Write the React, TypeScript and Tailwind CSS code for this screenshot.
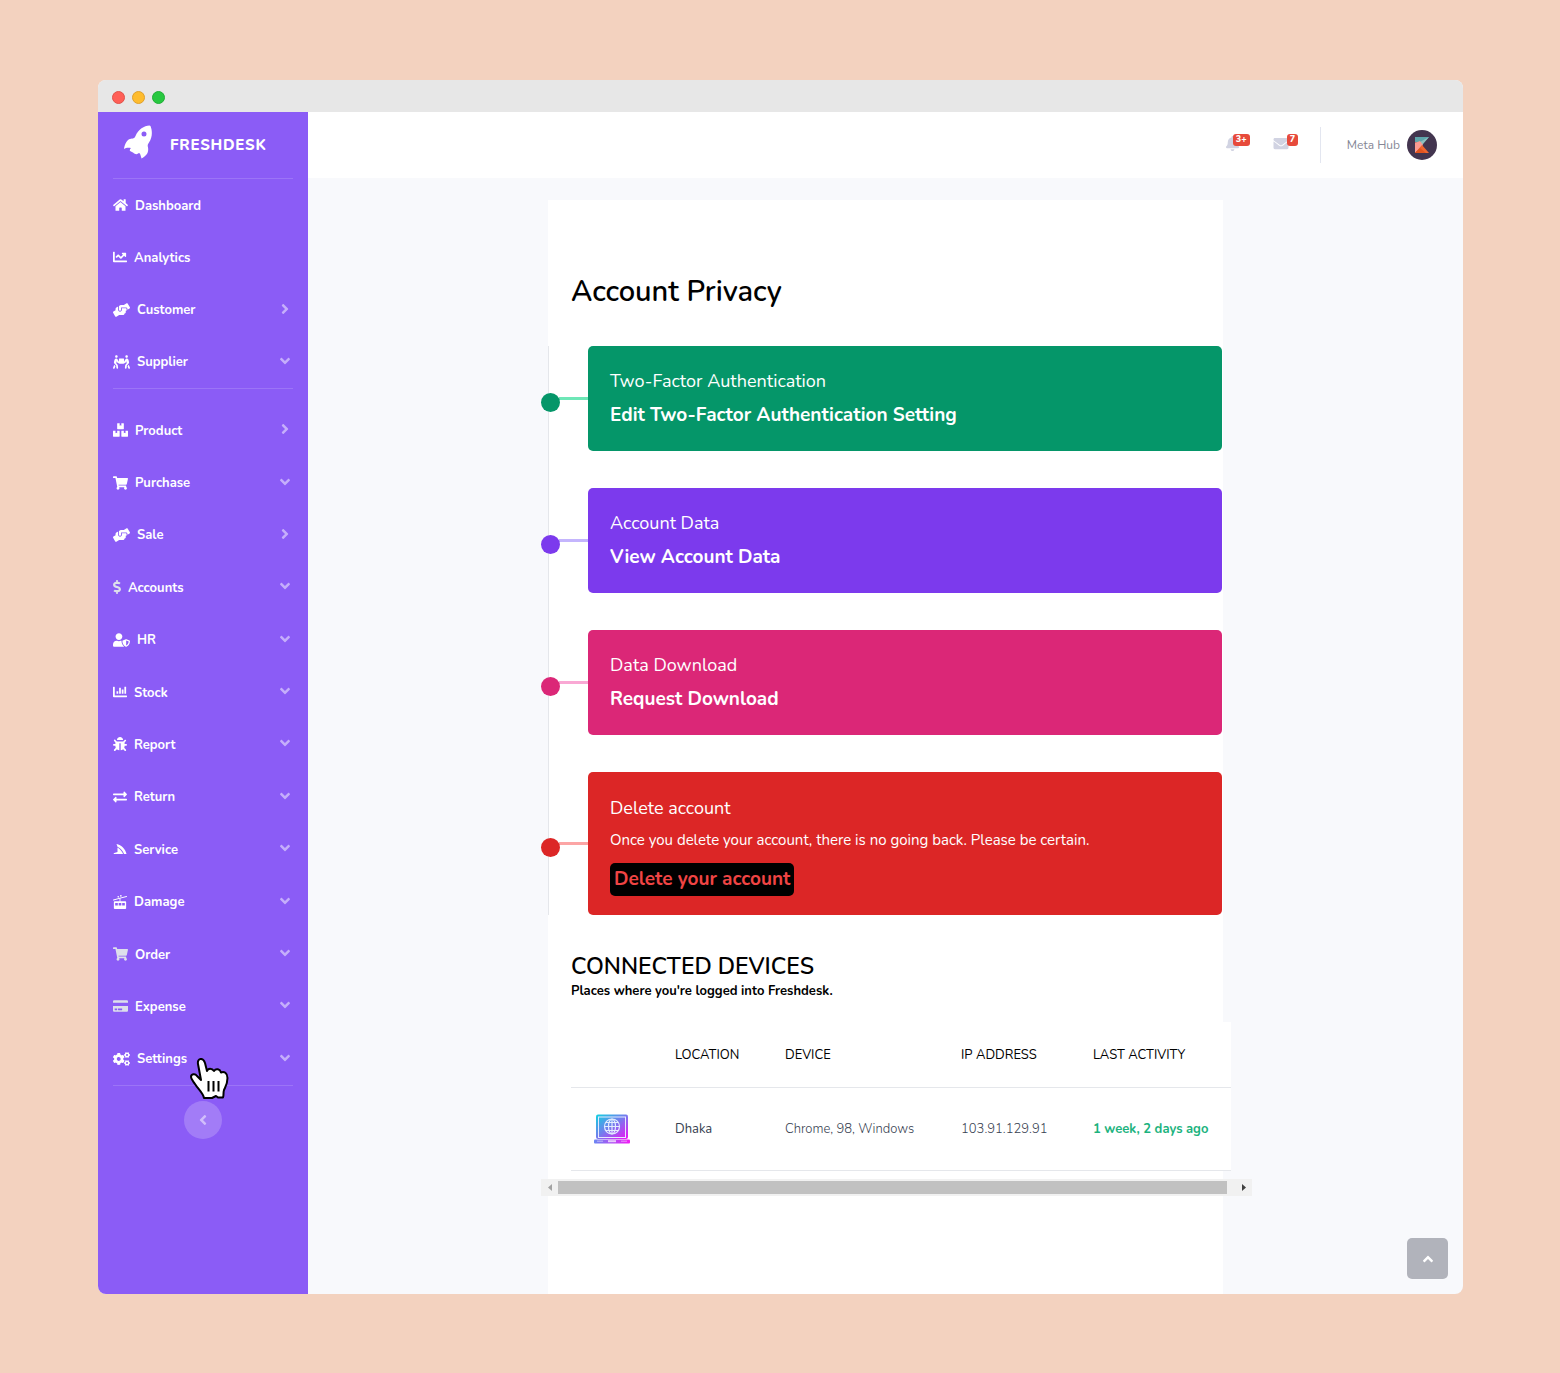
import React from "react";
import type { IconType } from "react-icons";
import {
  FaAngleDown,
  FaAngleLeft,
  FaAngleRight,
  FaAngleUp,
  FaBell,
  FaBoxes,
  FaBug,
  FaChartBar,
  FaChartLine,
  FaCogs,
  FaCreditCard,
  FaDollarSign,
  FaEnvelope,
  FaExchangeAlt,
  FaHandsHelping,
  FaHome,
  FaPeopleCarry,
  FaShoppingCart,
  FaTram,
  FaUserShield,
} from "react-icons/fa";

type NavEntry = {
  label: string;
  icon: IconType | typeof Sail;
  width: string;
  arrow?: "right" | "down";
  dim?: boolean;
};

function Sail({ className }: { className?: string }) {
  return (
    <svg viewBox="0 0 13 14" className={className} fill="currentColor" aria-hidden="true">
      <path d="M3 2C8 3 12 7 13 12H10.500C9.500 9 7 6 4 4.800Z" />
      <path d="M4 5.500C6.500 7 8.800 9.500 9.600 12H0.500L0 11.200L4 10Z" />
    </svg>
  );
}

const people: NavEntry[] = [
  { label: "Dashboard", icon: FaHome, width: "w-[15px]" },
  { label: "Analytics", icon: FaChartLine, width: "w-[14px]" },
  { label: "Customer", icon: FaHandsHelping, width: "w-[17px]", arrow: "right" },
  { label: "Supplier", icon: FaPeopleCarry, width: "w-[17px]", arrow: "down" },
];

const trade: NavEntry[] = [
  { label: "Product", icon: FaBoxes, width: "w-[15px]", arrow: "right" },
  { label: "Purchase", icon: FaShoppingCart, width: "w-[15px]", arrow: "down" },
  { label: "Sale", icon: FaHandsHelping, width: "w-[17px]", arrow: "right" },
  { label: "Accounts", icon: FaDollarSign, width: "w-[8px]", arrow: "down", dim: true },
  { label: "HR", icon: FaUserShield, width: "w-[17px]", arrow: "down" },
  { label: "Stock", icon: FaChartBar, width: "w-[14px]", arrow: "down" },
  { label: "Report", icon: FaBug, width: "w-[14px]", arrow: "down" },
  { label: "Return", icon: FaExchangeAlt, width: "w-[14px]", arrow: "down" },
  { label: "Service", icon: Sail, width: "w-[14px]", arrow: "down" },
  { label: "Damage", icon: FaTram, width: "w-[14px]", arrow: "down" },
  { label: "Order", icon: FaShoppingCart, width: "w-[15px]", arrow: "down", dim: true },
  { label: "Expense", icon: FaCreditCard, width: "w-[15px]", arrow: "down", dim: true },
  { label: "Settings", icon: FaCogs, width: "w-[17px]", arrow: "down" },
];

function NavItem({ entry }: { entry: NavEntry }) {
  const Icon = entry.icon;
  return (
    <a href="#" className="flex items-center text-[13px] leading-5 font-bold text-white">
      <Icon className={`h-[14px] shrink-0 ${entry.width} ${entry.dim ? "text-[#dddfeb]" : "text-white"}`} />
      <span className="flex-1 pt-px pl-[7px]">
        {entry.label}
        {entry.label === "Settings" && (
          <span className="relative">
            <HandCursor />
          </span>
        )}
      </span>
      {entry.arrow === "right" && <FaAngleRight className="mb-[2px] h-4 w-4 text-white/50" />}
      {entry.arrow === "down" && <FaAngleDown className="mb-[2px] h-4 w-4 text-white/50" />}
    </a>
  );
}

function HandCursor() {
  return (
    <svg viewBox="0 0 40 42" className="absolute top-2 left-[2px] z-10 h-[42px] w-[40px]" aria-hidden="true">
      <path
        d="M15 40 C14 35 9 31 6 26 C4 23 2 21 2 19 C2 16 6 15 8 18 L12 22 L9 6 C8 0 14 -1 16 5 L18 13 C19 10 23 10 25 13 C27 10 31 11 32 14.500 C35 13 38.500 15 38.500 20 C38.500 26 37 28 35 32 C34 35 35 37 34 39.500 L29 39.500 L27 38 L23 40 Z"
        fill="#fff"
        stroke="#000"
        strokeWidth="2"
        strokeLinejoin="round"
      />
      <path d="M19.500 23V33.500M24.500 23V33.500M29.500 23V33.500" stroke="#000" strokeWidth="2" />
    </svg>
  );
}

function Rocket() {
  return (
    <svg viewBox="0 0 28 34" className="mb-[6px] h-[34px] w-[28px]" aria-hidden="true">
      <path
        fill="#fff"
        fillRule="evenodd"
        d="M25.500 0.500 C20 1 14.500 4 11.500 11 C10.500 13.500 9 13.500 6 14 C3.500 14.500 0.500 19 0 24 C2 22.500 4.500 22.500 7 23 C6 24 5.500 25 6 26 L9 27.500 C11 29.500 13 29.500 14 28.500 C16 26.500 16.500 30 17.500 33.500 C22 31 25 28 24 22.500 C23.500 20.500 23.500 19.500 25 17.500 C28.500 12 28.500 6 26.500 1 Z M20 6.500 a2.500 2.500 0 1 1 0 5 a2.500 2.500 0 1 1 0 -5 Z"
      />
    </svg>
  );
}

function Avatar() {
  return (
    <svg viewBox="0 0 30 30" className="h-[30px] w-[30px]" role="img" aria-label="Meta Hub profile">
      <circle cx="15" cy="15" r="15" fill="#43354f" />
      <path d="M8 7H22L15 15L8 12Z" fill="#5ea5ab" />
      <path d="M13 12L22 7L15 15Z" fill="#8fc0bf" />
      <path d="M8 12L15 15L8 23Z" fill="#f2665a" />
      <path d="M8 13L13 11L16 15L8 23Z" fill="#fb9b92" />
      <path d="M15 15L22 23H8Z" fill="#f1662f" />
      <path d="M8 23L13 18L19 23Z" fill="#e2541f" />
    </svg>
  );
}

function Laptop() {
  return (
    <svg viewBox="0 0 36 30" className="h-[30px] w-[36px]" role="img" aria-label="Laptop">
      <defs>
        <linearGradient id="laptop" x1="0" y1="0" x2="1" y2="1">
          <stop offset="0" stopColor="#10d3e0" />
          <stop offset="0.500" stopColor="#7a78ee" />
          <stop offset="1" stopColor="#f011f5" />
        </linearGradient>
        <linearGradient id="base" x1="0" y1="0" x2="1" y2="0">
          <stop offset="0" stopColor="#6b86f2" />
          <stop offset="1" stopColor="#f21cf5" />
        </linearGradient>
      </defs>
      <rect x="2" y="0.500" width="32" height="24.500" rx="2" fill="url(#laptop)" />
      <rect x="4.500" y="3" width="27" height="20.500" fill="none" stroke="#e6e9ff" strokeWidth="1" />
      <g fill="none" stroke="#e3ecff" strokeWidth="1.200">
        <circle cx="18" cy="12.500" r="7.500" />
        <ellipse cx="18" cy="12.500" rx="3.500" ry="7.500" />
        <path d="M18 5V20M10.500 12.500H25.500M12 8.500H24M12 16.500H24" />
      </g>
      <rect x="0" y="25.500" width="36" height="4" rx="1" fill="url(#base)" />
      <path d="M3 27.200H9M27 27.200H33" stroke="#fff" strokeOpacity=".5" strokeWidth="1" />
      <path d="M14 27.200H22" stroke="#fff" strokeOpacity=".7" strokeWidth="2" />
    </svg>
  );
}

function TimelineCard({
  color,
  line,
  children,
}: {
  color: string;
  line: string;
  children: React.ReactNode;
}) {
  return (
    <section className="relative flex items-center">
      <span className={`absolute top-1/2 left-[-8px] h-[19px] w-[19px] -translate-y-[6px] rounded-full ${color}`} />
      <span className={`ml-[10px] h-[3px] w-[29px] shrink-0 ${line}`} />
      <div className={`flex flex-1 flex-col items-start rounded-[5px] px-[22px] ${color}`}>{children}</div>
    </section>
  );
}

export default function App() {
  return (
    <div className="flex min-h-screen bg-[#f3d2bf] pt-20 pr-[97px] pb-[79px] pl-[98px] font-[Nunito,Lato,sans-serif] text-black">
      <div className="flex flex-1 flex-col overflow-hidden rounded-lg bg-[#f8f9fc]">
        <div className="flex h-8 items-center gap-[7px] bg-[#e7e7e7] pt-[2px] pl-[14px]">
          <span className="h-[13px] w-[13px] rounded-full border border-[#e0524a] bg-[#ff5f57]" />
          <span className="h-[13px] w-[13px] rounded-full border border-[#dfa02c] bg-[#febc2e]" />
          <span className="h-[13px] w-[13px] rounded-full border border-[#20ae36] bg-[#28c840]" />
        </div>

        <div className="flex flex-1">
          <aside className="w-[210px] shrink-0 bg-[#8b5cf6] px-[15px]">
            <a href="#" className="flex h-[66px] items-center pl-[11px] text-white">
              <Rocket />
              <span className="ml-[18px] text-[15px] font-extrabold tracking-wider">FRESHDESK</span>
            </a>
            <nav aria-label="Main">
              <div className="grid h-[210px] auto-rows-fr border-t border-white/15">
                {people.map((e) => (
                  <NavItem key={e.label} entry={e} />
                ))}
              </div>
              <div className="grid h-[698px] auto-rows-fr border-y border-white/15 pt-[15px]">
                {trade.map((e) => (
                  <NavItem key={e.label} entry={e} />
                ))}
              </div>
            </nav>
            <div className="flex justify-center pt-[15px]">
              <button
                type="button"
                aria-label="Collapse sidebar"
                className="flex h-[38px] w-[38px] items-center justify-center rounded-full bg-white/20 text-white/50"
              >
                <FaAngleLeft className="h-4 w-4" />
              </button>
            </div>
          </aside>

          <div className="relative flex min-w-0 flex-1 flex-col">
            <header className="flex h-[66px] items-center justify-end bg-white pr-[26px]">
              <button type="button" aria-label="Alerts" className="relative mr-[33px] mb-1 text-[#d1d3e2]">
                <FaBell className="h-[15px] w-[15px]" />
                <span className="absolute -top-[2px] left-2 flex h-3 items-center rounded-[3px] bg-[#e74a3b] px-[3px] text-[9px] font-extrabold text-white">
                  3+
                </span>
              </button>
              <button type="button" aria-label="Messages" className="relative mr-[31px] mb-1 text-[#d1d3e2]">
                <FaEnvelope className="h-[15px] w-[16px]" />
                <span className="absolute -top-[2px] left-[14px] flex h-3 items-center rounded-[3px] bg-[#e74a3b] px-[3px] text-[9px] font-extrabold text-white">
                  7
                </span>
              </button>
              <div className="mr-[26px] h-9 w-px bg-[#e3e6f0]" />
              <a href="#" className="flex items-center gap-[7px] text-xs text-[#858796]">
                Meta Hub
                <Avatar />
              </a>
            </header>

            <main className="mx-auto mt-[22px] w-[675px] flex-1 bg-white pt-[72px]">
              <h1 className="pl-[23px] text-[29px] leading-10 font-semibold">Account Privacy</h1>

              <div className="mt-[34px] mr-px flex flex-col gap-[37px] border-l border-[#e5e7eb]">
                <TimelineCard color="bg-[#059669]" line="bg-[#6ee7b7]">
                  <h2 className="pt-[21px] text-lg leading-7 text-white">Two-Factor Authentication</h2>
                  <a href="#" className="pt-[6px] pb-[22px] text-[19px] leading-7 font-bold text-white">
                    Edit Two-Factor Authentication Setting
                  </a>
                </TimelineCard>
                <TimelineCard color="bg-[#7c3aed]" line="bg-[#c4b5fd]">
                  <h2 className="pt-[21px] text-lg leading-7 text-white">Account Data</h2>
                  <a href="#" className="pt-[6px] pb-[22px] text-[19px] leading-7 font-bold text-white">
                    View Account Data
                  </a>
                </TimelineCard>
                <TimelineCard color="bg-[#db2777]" line="bg-[#f9a8d4]">
                  <h2 className="pt-[21px] text-lg leading-7 text-white">Data Download</h2>
                  <a href="#" className="pt-[6px] pb-[22px] text-[19px] leading-7 font-bold text-white">
                    Request Download
                  </a>
                </TimelineCard>
                <TimelineCard color="bg-[#dc2626]" line="bg-[#fca5a5]">
                  <h2 className="pt-[22px] text-lg leading-7 text-white">Delete account</h2>
                  <p className="pt-[6px] text-[15px] leading-6 text-white">
                    Once you delete your account, there is no going back. Please be certain.
                  </p>
                  <button
                    type="button"
                    className="mt-[11px] mb-[19px] rounded-[5px] bg-black px-1 text-[19px] leading-[33px] font-bold text-[#ef4444]"
                  >
                    Delete your account
                  </button>
                </TimelineCard>
              </div>

              <h2 className="mt-9 pl-[23px] text-[23px] leading-8 font-semibold">CONNECTED DEVICES</h2>
              <p className="pl-[23px] text-[13px] leading-4 font-bold">Places where you're logged into Freshdesk.</p>

              <div className="mt-[23px] -mr-[29px] -ml-[7px] flex flex-col">
                <div className="pr-[21px] pl-[30px]">
                  <table className="w-full table-fixed bg-white text-left text-[13px]">
                    <colgroup>
                      <col className="w-[82px]" />
                      <col className="w-[110px]" />
                      <col className="w-[176px]" />
                      <col className="w-[132px]" />
                      <col />
                    </colgroup>
                    <thead>
                      <tr className="h-[65px] border-b border-[#e5e7eb]">
                        <th aria-label="Icon" />
                        <th className="pt-[2px] pl-[22px] font-normal">LOCATION</th>
                        <th className="pt-[2px] pl-[22px] font-normal">DEVICE</th>
                        <th className="pt-[2px] pl-[22px] font-normal">IP ADDRESS</th>
                        <th className="pt-[2px] pl-[22px] font-normal">LAST ACTIVITY</th>
                      </tr>
                    </thead>
                    <tbody>
                      <tr className="h-[83px] border-b border-[#e5e7eb]">
                        <td className="pl-[23px]">
                          <Laptop />
                        </td>
                        <td className="pt-[2px] pl-[22px] text-[#374151]">Dhaka</td>
                        <td className="pt-[2px] pl-[22px] font-light text-[#374151]">Chrome, 98, Windows</td>
                        <td className="pt-[2px] pl-[22px] font-light text-[#374151]">103.91.129.91</td>
                        <td className="pt-[2px] pl-[22px] font-bold text-[#1cb37e]">1 week, 2 days ago</td>
                      </tr>
                    </tbody>
                  </table>
                </div>
                <div className="mt-2 flex h-[17px] items-center bg-[#f1f1f1]">
                  <button type="button" aria-label="Scroll left" className="flex w-[17px] justify-center text-[#a3a3a3]">
                    <svg viewBox="0 0 4 7" className="h-[7px] w-1" fill="currentColor">
                      <path d="M4 0V7L0 3.500Z" />
                    </svg>
                  </button>
                  <div className="mr-2 h-[13px] flex-1 bg-[#c1c1c1]" />
                  <button type="button" aria-label="Scroll right" className="flex w-[17px] justify-center text-[#404040]">
                    <svg viewBox="0 0 4 7" className="h-[7px] w-1" fill="currentColor">
                      <path d="M0 0V7L4 3.500Z" />
                    </svg>
                  </button>
                </div>
              </div>
            </main>

            <button
              type="button"
              aria-label="Back to top"
              className="absolute right-[15px] bottom-[15px] flex h-[41px] w-[41px] items-center justify-center rounded-[5px] bg-[#b1b3bb] text-white"
            >
              <FaAngleUp className="h-4 w-4" />
            </button>
          </div>
        </div>
      </div>
    </div>
  );
}
